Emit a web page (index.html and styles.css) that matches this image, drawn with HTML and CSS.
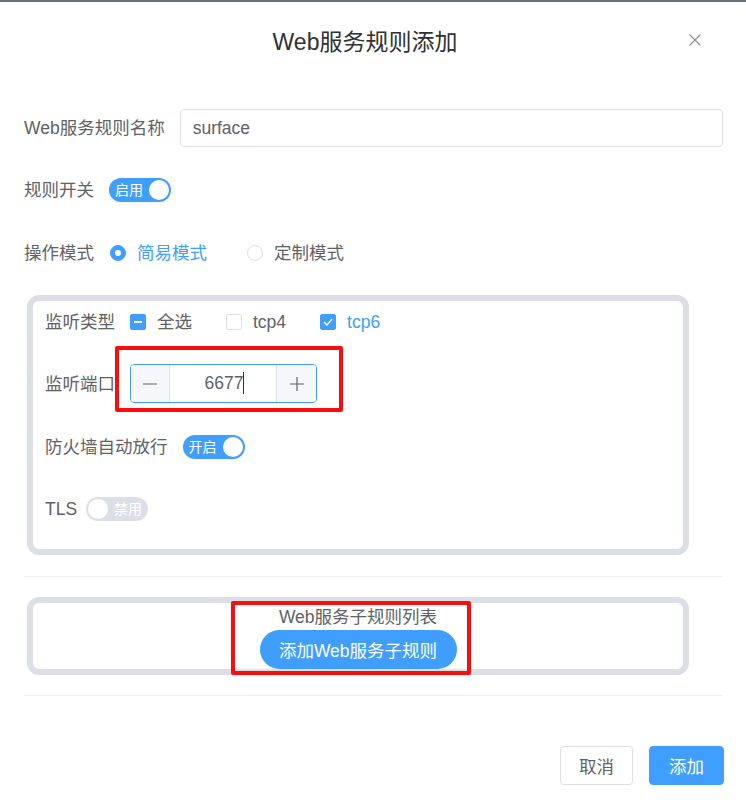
FILE: index.html
```html
<!DOCTYPE html>
<html lang="zh">
<head>
<meta charset="utf-8">
<title>Web服务规则添加</title>
<link rel="stylesheet" href="styles.css">
</head>
<body>
<div class="topline"></div>
<div class="header">
  <span></span>
  <h1 class="title">Web服务规则添加</h1>
  <button class="close" aria-label="close">
    <svg width="12" height="12" viewBox="0 0 12 12"><path d="M0.5 0.5L11.5 11.5M11.5 0.5L0.5 11.5" stroke="#909399" stroke-width="1.2" fill="none"/></svg>
  </button>
</div>
<div class="form">
  <div class="row row-name">
    <label class="label">Web服务规则名称</label>
    <div class="input">surface</div>
  </div>
  <div class="row row-switch">
    <label class="label">规则开关</label>
    <div class="switch on"><span class="sw-text">启用</span><span class="knob"></span></div>
  </div>
  <div class="row row-mode">
    <label class="label">操作模式</label>
    <span class="radio checked"></span><span class="opt active">简易模式</span>
    <span class="radio"></span><span class="opt">定制模式</span>
  </div>

  <div class="box box1">
    <div class="row rowa">
      <label class="label in">监听类型</label>
      <span class="cb indet"><span class="bar"></span></span><span class="cbt">全选</span>
      <span class="cb"></span><span class="cbt">tcp4</span>
      <span class="cb checked"><svg width="10" height="8" viewBox="0 0 10 8"><path d="M1 4L4 7L9 1" stroke="#fff" stroke-width="1.4" fill="none"/></svg></span><span class="cbt active">tcp6</span>
    </div>
    <div class="row rowb">
      <label class="label in">监听端口</label>
      <div class="numbox">
        <span class="nbtn minus"><svg width="16" height="16" viewBox="0 0 16 16"><path d="M1 8H15" stroke="#606266" stroke-width="1.2"/></svg></span>
        <span class="nval">6677<span class="caret"></span></span>
        <span class="nbtn plus"><svg width="16" height="16" viewBox="0 0 16 16"><path d="M1 8H15M8 1V15" stroke="#606266" stroke-width="1.2"/></svg></span>
      </div>
      <div class="mark mark1"></div>
    </div>
    <div class="row rowc">
      <label class="label in">防火墙自动放行</label>
      <div class="switch on"><span class="sw-text">开启</span><span class="knob"></span></div>
    </div>
    <div class="row rowd">
      <label class="label in tls">TLS</label>
      <div class="switch off"><span class="knob"></span><span class="sw-text">禁用</span></div>
    </div>
  </div>

  <div class="divider first"></div>

  <div class="box box2">
    <div class="subtitle">Web服务子规则列表</div>
    <button class="addsub">添加Web服务子规则</button>
    <div class="mark mark2"></div>
  </div>

  <div class="divider second"></div>

  <div class="footer">
    <button class="btn cancel">取消</button>
    <button class="btn primary">添加</button>
  </div>
</div>
</body>
</html>
```

FILE: styles.css
```css
* { box-sizing: border-box; }
body {
  margin: 0;
  background: #fff;
  font-family: "Liberation Sans", "Noto Sans CJK SC", sans-serif;
  color: #606266;
  width: 746px;
  height: 805px;
  overflow: hidden;
}
.topline { height: 2px; background: #66727c; }
.header {
  height: 80px;
  display: grid;
  grid-template-columns: 1fr auto 1fr;
  align-items: center;
}
.title {
  margin: 0;
  font-weight: normal;
  font-size: 23px;
  line-height: 30px;
  color: #303133;
  padding-right: 16px;
}
.close {
  justify-self: end;
  margin-right: 45px;
  background: none;
  border: 0;
  padding: 0;
  width: 12px;
  height: 12px;
  display: flex;
  margin-top: -4px;
}
.form { padding: 0 23px 0 24px; }
.row { display: flex; align-items: center; position: relative; }
.label {
  font-size: 17.5px;
  line-height: 24px;
  color: #606266;
  white-space: nowrap;
  margin-right: 16px;
}
.label.in { margin-right: 15px; }
.label.tls { margin-right: 9px; }
.row-name { margin-top: 27px; height: 38px; }
.input {
  flex: 1;
  height: 38px;
  border: 1px solid #dcdfe6;
  border-radius: 4px;
  padding: 0 12px;
  margin-left: -1px;
  font-size: 17.5px;
  line-height: 36px;
  color: #606266;
}
.row-switch { margin-top: 31px; height: 24px; }
.row-switch .label { margin-right: 15px; }
.switch {
  width: 62px;
  height: 24px;
  border-radius: 12px;
  display: flex;
  align-items: center;
  padding: 0 2px 0 6px;
  justify-content: space-between;
}
.switch.on { background: #409eff; }
.switch.off { background: #dcdfe6; padding: 0 6px 0 2px; }
.sw-text { color: #fff; font-size: 14px; line-height: 20px; }
.knob { width: 20px; height: 20px; border-radius: 50%; background: #fff; }

.row-mode { margin-top: 39px; height: 24px; }
.radio {
  width: 16px; height: 16px; border-radius: 50%;
  border: 1px solid #dcdfe6;
  background: #fff;
  display: inline-flex; align-items: center; justify-content: center;
  margin-right: 11px;
}
.radio.checked { background: #409eff; border-color: #409eff; }
.radio.checked::after { content: ""; width: 6px; height: 6px; border-radius: 50%; background: #fff; }
.opt { font-size: 17.5px; line-height: 24px; color: #606266; margin-right: 40px; }
.opt.active { color: #409eff; }

.box {
  border: 6px solid #dcdfe6;
  border-radius: 12px;
  margin: 0 34px 0 3px;
  position: relative;
}
.box1 { margin-top: 30px; padding: 9px 12px 28px 12px; }
.rowa { height: 24px; }
.cb {
  width: 16px; height: 16px; border-radius: 2px;
  border: 1px solid #dcdfe6; background: #fff;
  display: inline-flex; align-items: center; justify-content: center;
  margin-right: 11px;
}
.cb.indet, .cb.checked { background: #409eff; border-color: #409eff; }
.bar { width: 8px; height: 2px; background: #fff; }
.cbt { font-size: 17.5px; line-height: 24px; color: #606266; margin-right: 34px; }
.cbt.active { color: #409eff; }
.rowb { margin-top: 30px; height: 39px; }
.numbox {
  width: 187px; height: 39px;
  border: 1px solid #409eff; border-radius: 4px;
  display: flex; overflow: hidden;
}
.nbtn {
  width: 39px; background: #f5f7fa;
  display: flex; align-items: center; justify-content: center;
}
.minus { border-right: 1px solid #dcdfe6; }
.plus { border-left: 1px solid #dcdfe6; width: 40px; }
.nval {
  flex: 1; text-align: center;
  font-size: 17.5px; line-height: 37px; color: #606266;
  padding-left: 3px;
}
.caret {
  display: inline-block; width: 1px; height: 22px; background: #303133;
  vertical-align: -5px;
}
.mark {
  position: absolute;
  border: 4px solid #fb0d0d;
  border-radius: 2px;
  pointer-events: none;
}
.mark1 { left: 70px; top: -18px; width: 228px; height: 66px; }
.rowc { margin-top: 32px; height: 24px; }
.rowd { margin-top: 38px; height: 24px; }

.divider { height: 1px; background: #ebeef5; }
.divider.first { margin-top: 21px; }
.box2 {
  margin-top: 20px;
  height: 78px;
  padding-top: 4px;
  display: flex; flex-direction: column; align-items: center;
}
.subtitle { font-size: 17.5px; line-height: 20px; color: #606266; }
.addsub {
  margin-top: 3px;
  width: 197px; height: 40px;
  border: 0; border-radius: 20px;
  background: #409eff; color: #fff;
  font-family: inherit; font-size: 17.5px;
  position: relative; z-index: 1;
}
.mark2 { left: 198px; top: -2px; width: 240px; height: 74px; z-index: 2; }
.divider.second { margin-top: 20px; }
.footer { display: flex; justify-content: flex-end; gap: 16px; margin-top: 50px; padding-right: 0; }
.btn {
  height: 39px; border-radius: 4px;
  font-family: inherit; font-size: 17.5px;
  padding: 0;
}
.cancel { width: 73px; background: #fff; border: 1px solid #dcdfe6; color: #606266; }
.primary { width: 75px; background: #409eff; border: 1px solid #409eff; color: #fff; margin-right: -1px; }
```
